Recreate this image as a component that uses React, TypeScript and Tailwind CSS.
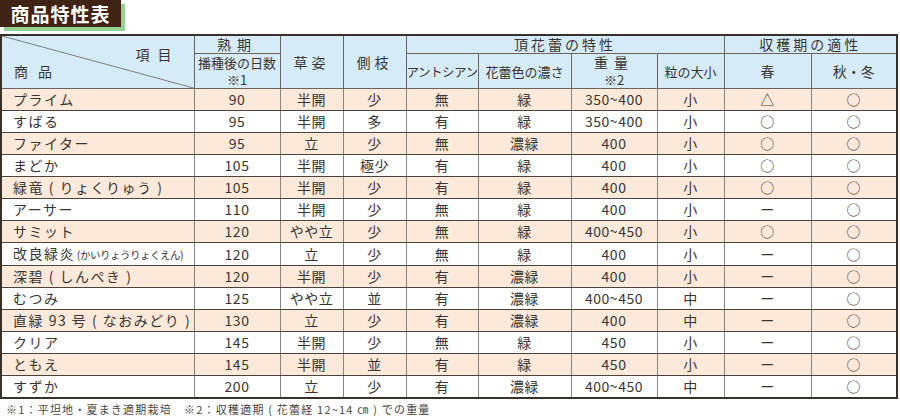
const rows = [
  ['プライム', '90', '半開', '少', '無', '緑', '350~400', '小', '△', '○'],
  ['すばる', '95', '半開', '多', '有', '緑', '350~400', '小', '○', '○'],
  ['ファイター', '95', '立', '少', '無', '濃緑', '400', '小', '○', '○'],
  ['まどか', '105', '半開', '極少', '有', '緑', '400', '小', '○', '○'],
  ['緑竜 ( りょくりゅう )', '105', '半開', '少', '有', '緑', '400', '小', '○', '○'],
  ['アーサー', '110', '半開', '少', '無', '緑', '400', '小', 'ー', '○'],
  ['サミット', '120', 'やや立', '少', '無', '緑', '400~450', '小', '○', '○'],
  ['改良緑炎', '120', '立', '少', '無', '緑', '400', '小', 'ー', '○'],
  ['深碧 ( しんぺき )', '120', '半開', '少', '有', '濃緑', '400', '小', 'ー', '○'],
  ['むつみ', '125', 'やや立', '並', '有', '濃緑', '400~450', '中', 'ー', '○'],
  ['直緑 93 号 ( なおみどり )', '130', '立', '少', '有', '濃緑', '400', '中', 'ー', '○'],
  ['クリア', '145', '半開', '少', '無', '緑', '450', '小', 'ー', '○'],
  ['ともえ', '145', '半開', '並', '有', '緑', '450', '小', 'ー', '○'],
  ['すずか', '200', '立', '少', '有', '濃緑', '400~450', '中', 'ー', '○'],
];

const widths = [193, 86, 63, 63, 72, 93, 86, 67, 87, 86];

const th = 'border border-[#6b625b] font-normal text-center leading-[17px] whitespace-nowrap';

export default function App() {
  return (
    <div
      className="w-[900px] h-[420px] bg-white text-[#3a3532]"
      style={{ fontFamily: '"Noto Sans CJK JP", "Noto Sans", sans-serif' }}
    >
      <div className="relative h-[34px]">
        <div className="absolute left-[4px] top-[4px] w-[121px] h-[27px] bg-[#93d092]" />
        <div className="absolute left-0 top-0 w-[121px] h-[27px] bg-[#3f2315] text-white text-[19px] leading-[27px] font-bold flex items-center justify-center tracking-[1px]">
          商品特性表
        </div>
      </div>
      <table className="border-collapse table-fixed border-2 border-[#3a302a] w-[898px] text-[14px]">
        <colgroup>
          {widths.map((w, i) => (
            <col key={i} style={{ width: w }} />
          ))}
        </colgroup>
        <thead className="bg-[#d5ecf8]">
          <tr className="h-[17px]">
            <th rowSpan={2} className={th + ' relative text-left p-0'}>
              <svg className="absolute inset-0 w-full h-full" preserveAspectRatio="none" viewBox="0 0 193 52">
                <line x1="0" y1="0" x2="193" y2="52" stroke="#6b625b" strokeWidth="0.8" />
              </svg>
              <div className="relative h-[48px]">
                <span className="absolute right-[14px] top-[8px] tracking-[8px]">項目</span>
                <span className="absolute left-[12px] top-[25px] tracking-[10px]">商品</span>
              </div>
            </th>
            <th className={th + ' tracking-[6px] leading-[16px]'}>熟期</th>
            <th rowSpan={2} className={th + ' tracking-[4px]'}>草姿</th>
            <th rowSpan={2} className={th + ' tracking-[4px]'}>側枝</th>
            <th colSpan={4} className={th + ' tracking-[3px] leading-[16px]'}>頂花蕾の特性</th>
            <th colSpan={2} className={th + ' tracking-[3px] leading-[16px]'}>収穫期の適性</th>
          </tr>
          <tr className="h-[31px]">
            <th className={th + ' text-[13px] leading-[15px] px-0 py-0'}>
              <div>播種後の日数</div>
              <div>※1</div>
            </th>
            <th className={th + ' text-[12.5px] px-0 tracking-[-0.5px]'}>アントシアン</th>
            <th className={th + ' text-[13px] px-0'}>花蕾色の濃さ</th>
            <th className={th + ' leading-[15px] py-0'}>
              <div className="tracking-[6px]">重量</div>
              <div className="text-[13px]">※2</div>
            </th>
            <th className={th + ' text-[13px] px-0'}>粒の大小</th>
            <th className={th}>春</th>
            <th className={th}>秋・冬</th>
          </tr>
        </thead>
        <tbody>
          {rows.map((r, i) => (
            <tr key={i} className={i % 2 === 0 ? 'bg-[#fde9da] h-[22px]' : 'bg-white h-[22px]'}>
              {r.map((c, j) => (
                <td
                  key={j}
                  className={
                    'border-x border-x-[#8a8580] border-y border-y-[#4a423c] p-0 leading-[21px] whitespace-nowrap overflow-hidden ' +
                    (j === 0 ? 'text-left pl-[11px] tracking-[1.5px]' : 'text-center tracking-[0.5px]')
                  }
                >
                  {j === 0 && i === 7 ? (
                    <>
                      改良緑炎
                      <span className="text-[10.5px] tracking-[-0.5px]"> (かいりょうりょくえん)</span>
                    </>
                  ) : (
                    c
                  )}
                </td>
              ))}
            </tr>
          ))}
        </tbody>
      </table>
      <div className="pl-[6px] pt-[4px] text-[11px] leading-[13px] text-[#4a4540] tracking-[1.2px]">
        ※1：平坦地・夏まき適期栽培　※2：収穫適期 ( 花蕾経 12~14 ㎝ ) での重量
      </div>
    </div>
  );
}
